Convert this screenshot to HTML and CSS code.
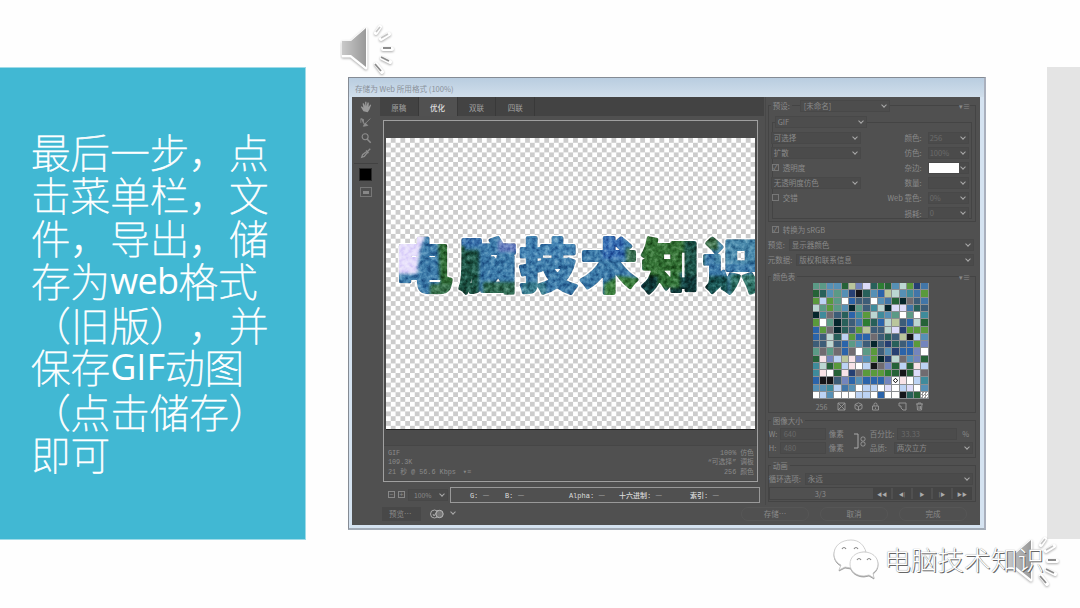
FILE: index.html
```html
<!DOCTYPE html>
<html lang="zh-CN">
<head>
<meta charset="utf-8">
<title>存储为 Web 所用格式</title>
<link rel="stylesheet" href="styles.css">
</head>
<body>
<svg class="defs" width="0" height="0">
  <defs>
    <linearGradient id="horn" x1="0" x2="1"><stop offset="0" stop-color="#c9c9c9"/><stop offset="1" stop-color="#999"/></linearGradient>
    <symbol id="speaker" viewBox="0 0 56 56">
      <g fill="#fff" stroke="#fff" stroke-linecap="round" stroke-linejoin="round" class="soft">
        <path d="M3 18h8L26 5v39L11 32H3z" stroke-width="3"/>
        <path d="M36 9l4-6M41 15l8-5M43 25h9M42 34l8 4M36 40l6 8" stroke-width="4"/>
      </g>
      <path d="M2 17h9L26 4v39L11 31H2z" fill="url(#horn)"/>
      <path d="M36 8l4-5M41 14l7-4" stroke="#c4c4c4" stroke-width="1.6"/>
      <path d="M43 24h8M41 33l8 4M35 40l6 7" stroke="#8c8c8c" stroke-width="1.8"/>
    </symbol>
  </defs>
</svg>
<main class="slide">
  <section class="note">
    <p>最后一步，点</p>
    <p>击菜单栏，文</p>
    <p>件，导出，储</p>
    <p>存为<span class="latin web">web</span>格式</p>
    <p class="drop">（旧版），并</p>
    <p>保存<span class="latin gif">GIF</span>动图</p>
    <p class="drop2">（点击储存）</p>
    <p class="last">即可</p>
  </section>

  <section class="dialog">
    <header class="titlebar">存储为 Web 所用格式 (100%)</header>
    <div class="body">
      <div class="upper">
        <nav class="tools">
          <svg viewBox="0 0 14 14"><path d="M4 12L1 7l1-1 2 2-1-5 1.500-.5L6 6V1h1.500v5L9 1.500l1.300.5L10 7l2-3 1 .8-2 5L9 13z" fill="#999"/></svg>
          <svg viewBox="0 0 14 14"><path d="M1 3l3 1v5M1 3v5M5 10l7-7M6 8l3 3-5 1z" fill="#8d8d8d" stroke="#8d8d8d"/></svg>
          <svg viewBox="0 0 14 14"><circle cx="6" cy="5.500" r="3.500" fill="none" stroke="#8d8d8d" stroke-width="1.300"/><path d="M8.500 8.500l4 4" stroke="#8d8d8d" stroke-width="1.800"/></svg>
          <svg viewBox="0 0 14 14"><path d="M2 12l1-3 5-4 1 1-4 5zM7 4l3 3M9 5l3-3" fill="none" stroke="#8d8d8d" stroke-width="1.500"/></svg>
          <i class="rule"></i>
          <i class="swatch"></i>
          <i class="slice"></i>
        </nav>
        <div class="center">
          <div class="tabs"><span>原稿</span><span class="on">优化</span><span>双联</span><span>四联</span></div>
          <div class="preview">
            <div class="canvas">
              <svg class="art" viewBox="0 0 369 292" width="369" height="292">
                <defs>
                  <pattern id="forest" patternUnits="userSpaceOnUse" x="0" y="90" width="400" height="80">
                    <rect width="400" height="80" fill="#3e7dab"/>
                    <g class="haze">
                      <path d="M0 0h42L34 22 31 46H0z" fill="#e5ddfb"/>
                      <path d="M52 10h26v60H48l6-16z" fill="#2f6b35"/>
                      <path d="M44 56h30v20H44z" fill="#3c7550"/>
                      <path d="M73 8h26v10H73z" fill="#3b74ae"/>
                      <path d="M73 22h20v46H72z" fill="#1d5445"/>
                      <path d="M97 54h34v20H97z" fill="#2f6a52"/>
                      <path d="M112 12h20v12h-20z" fill="#6f86c4"/>
                      <path d="M132 8h60v24h-60z" fill="#4585b4"/>
                      <path d="M136 54h24v18h-24z" fill="#3a7f90"/>
                      <path d="M218 56l14-8 22 2v24h-36z" fill="#3a7d3c"/>
                      <path d="M240 20h16v20h-16z" fill="#3a6f52"/>
                      <path d="M216 5h22v26h-22z" fill="#386fb3"/>
                      <path d="M256 5h50v34l-20 11-30 5z" fill="#357336"/>
                      <path d="M256 48h62v28h-62z" fill="#0f3838"/>
                      <path d="M272 43h22v17h-22z" fill="#327338"/>
                      <path d="M298 12h20v36h-20z" fill="#1c5348"/>
                      <path d="M318 48h24v26h-24z" fill="#16504f"/>
                      <path d="M328 8h60v28h-60z" fill="#4a8aac"/>
                      <path d="M318 8h14v14h-14z" fill="#3d6f4a"/>
                      <path d="M344 46h40v30h-40z" fill="#35796e"/>
                    </g>
                  </pattern>
                  <filter id="leaf" x="-.02" y="-.05" width="1.04" height="1.1" color-interpolation-filters="sRGB">
                    <feTurbulence type="fractalNoise" baseFrequency=".22" numOctaves="3" seed="4" result="n"/>
                    <feColorMatrix in="n" values="1.200 0 0 0 -.12  1.200 0 0 0 -.12  1.200 0 0 0 -.12  0 0 0 0 1" result="m"/>
                    <feBlend in="m" in2="SourceGraphic" mode="soft-light" result="b"/>
                    <feComposite in="b" in2="SourceGraphic" operator="in" result="c"/>
                    <feMorphology in="SourceAlpha" operator="dilate" radius=".8" result="d"/>
                    <feFlood flood-color="#fff"/>
                    <feComposite in2="d" operator="in" result="e"/>
                    <feMerge><feMergeNode in="e"/><feMergeNode in="c"/></feMerge>
                  </filter>
                </defs>
                <text class="glyphs" x="9 73.500 133.500 194.500 256 317" y="149" fill="url(#forest)" stroke="url(#forest)" filter="url(#leaf)">电脑技术知识</text>
              </svg>
            </div>
            <div class="info">
              <div>GIF<br>109.3K<br>21 秒 @ 56.6 Kbps　<b>▾≡</b></div>
              <div class="right">100% 仿色<br>“可选择” 调板<br>256 颜色</div>
            </div>
          </div>
          <div class="status">
            <i class="sq">−</i><i class="sq">+</i><span class="dd zoom">100%</span>
            <div class="readout"><span class="g">G: <u>—</u></span><span class="b">B: <u>—</u></span><span class="a">Alpha: <u>—</u></span><span class="h">十六进制: <u>—</u></span><span>索引: <u>—</u></span></div>
          </div>
        </div>
        <aside class="side">
          <div class="group preset">
            <div class="legend"><span>预设:</span><span class="dd name">[未命名]</span><b>▾≡</b></div>
            <div class="group format">
              <div class="legend"><span class="dd gifsel">GIF</span></div>
              <div class="row"><span class="dd">可选择</span><label>颜色:</label><span class="dd num">256</span></div>
              <div class="row"><span class="dd">扩散</span><label>仿色:</label><span class="dd num">100%</span></div>
              <div class="row"><span class="check"><i>✓</i>透明度</span><label>杂边:</label><span class="dd num matte"></span></div>
              <div class="row"><span class="dd">无透明度仿色</span><label>数量:</label><span class="dd num"></span></div>
              <div class="row"><span class="check"><i></i>交错</span><label>Web 靠色:</label><span class="dd num">0%</span></div>
              <div class="row"><span class="check"></span><label>损耗:</label><span class="dd num">0</span></div>
            </div>
          </div>
          <div class="line srgb"><span class="check"><i>✓</i>转换为 sRGB</span></div>
          <div class="line"><span>预览:</span><span class="dd wide">显示器颜色</span></div>
          <div class="line"><span>元数据:</span><span class="dd wide">版权和联系信息</span></div>
          <div class="group table">
            <div class="legend"><span>颜色表</span><b>▾≡</b></div>
            <div class="palette" id="palette"></div>
            <div class="icons">
              <span>256</span>
              <svg viewBox="0 0 9 9"><path d="M1 1h7v7H1zM1 1l7 7M8 1L1 8"/></svg>
              <svg viewBox="0 0 9 9"><path d="M4.500.8L8 2.500v4L4.500 8.200 1 6.500v-4zM1 2.500l3.500 2L8 2.500M4.500 4.500v3.700"/></svg>
              <svg viewBox="0 0 9 9"><path d="M1.500 4h6v4h-6zM3 4V2.500a1.500 1.500 0 013 0V4M4.500 5.500V7"/></svg>
              <svg class="gap" viewBox="0 0 9 9"><path d="M1 1h7v7H5L3 6V4H1z"/></svg>
              <svg viewBox="0 0 9 9"><path d="M1 2h7M3 2V1h3v1M2 2l.5 6h4L7 2M4 4v3M5.500 4v3"/></svg>
            </div>
          </div>
          <div class="group size">
            <div class="legend"><span>图像大小</span></div>
            <div class="sizes">
              <div class="dims"><div><span>W:</span><i>640</i><span>像素</span></div><div><span>H:</span><i>480</i><span>像素</span></div></div>
              <svg viewBox="0 0 14 18"><path d="M1 2h4v14H1" stroke="#aaa"/><rect x="8" y="5" width="4" height="4" rx="1.500"/><rect x="8" y="10" width="4" height="4" rx="1.500"/></svg>
              <div class="scale"><div><span>百分比:</span><i>33.33</i><span>%</span></div><div><span>品质:</span><span class="dd wide">两次立方</span></div></div>
            </div>
          </div>
          <div class="group anim">
            <div class="legend"><span>动画</span></div>
            <div class="line"><span>循环选项:</span><span class="dd wide">永远</span></div>
            <div class="player"><span>3/3</span><i>◀◀</i><i>◀|</i><i>▶</i><i>|▶</i><i>▶▶</i></div>
          </div>
        </aside>
      </div>
      <footer class="actions">
        <span class="btn">预览…</span>
        <svg viewBox="0 0 14 12" width="14" height="12"><circle cx="4.500" cy="6" r="4" fill="none" stroke="#aaa"/><circle cx="9.500" cy="6" r="3.700" fill="#777" stroke="#bbb"/><path d="M3 6l1 2 4-6" fill="none" stroke="#aaa"/></svg>
        <span class="dd browser"></span>
        <div class="pills"><span>存储…</span><span>取消</span><span>完成</span></div>
      </footer>
    </div>
  </section>
  <aside class="strip"></aside>
</main>
<svg class="speaker top"><use href="#speaker"/></svg>
<svg class="speaker bottom"><use href="#speaker"/></svg>
<div class="watermark">
  <svg viewBox="0 0 46 42" width="46" height="42">
    <path d="M18 3C8 3 1 9 1 17c0 5 3 9 7 11l-2 5 6-3 6 1c1 0 0-1 0-3 0-7 6-13 15-13C31 8 26 3 18 3z"/>
    <path d="M31 15c-8 0-14 5-14 12s6 12 14 12l5-1 5 3-1-5c3-2 5-5 5-9 0-7-6-12-14-12z"/>
    <path d="M9 12q2-3 4 0M21 12q2-3 4 0M24 23q2-3 4 0M34 23q2-3 4 0" class="eye"/>
  </svg>
  <span>电脑技术知识</span>
</div>
<script src="palette.js"></script>
</body>
</html>
```
FILE: styles.css
```css
* { box-sizing: border-box; }
body {
  margin: 0; width: 1080px; height: 608px; overflow: hidden; position: relative;
  background: #fefefe; font-family: "Noto Sans CJK SC", "Noto Sans", sans-serif;
}
i { font-style: normal; }
u { text-decoration: none; font-family: "Noto Sans CJK SC", sans-serif; }
.defs { position: absolute; }
.slide { display: flex; align-items: flex-start; height: 608px; }

.note {
  width: 305px; height: 471px; margin-top: 68px; padding: 61px 0 0 31px;
  background: #41b8d3; color: #fff; font-weight: 100; font-size: 39.600px;
  outline: 1px solid #9fdbe8; text-spacing-trim: space-all;
}
.note p { margin: 0; height: 43px; line-height: 43px; white-space: nowrap; -webkit-text-stroke: .7px #fff; }
.note .drop { padding-top: 1px; }
.note .drop2 { height: 44px; padding-top: 2px; }
.note p .latin { font-family: "Open Sans", "Noto Sans", sans-serif; font-weight: 400; font-size: 36px; line-height: 1; vertical-align: 3px; -webkit-text-stroke: 0; }
.web { letter-spacing: -.6px; }

.dialog {
  width: 638px; height: 453px; margin: 77px 0 0 43px; padding: 0 4px 4px 3px;
  background: #d5e3f1; border: 1px solid #858b94; border-right: 2px solid #aab0bd; border-bottom: 2px solid #a2abb6;
  font-size: 7.500px; color: #8a8a8a;
}
.titlebar { height: 19px; line-height: 21px; color: #8a919a; font-size: 7.600px; background: linear-gradient(#b9cde0, #d0deeb); margin: 0 -4px 0 -3px; padding-left: 6px; }
.body { height: 428px; background: #505050; }
.upper { display: flex; height: 408px; }

.tools { width: 28px; display: flex; flex-direction: column; align-items: center; padding-top: 4px; }
.tools svg { width: 12px; height: 12px; margin-bottom: 3.300px; }
.rule { width: 24px; height: 1px; background: #424242; margin: 1px 0 4px; }
.swatch { width: 13px; height: 13px; background: #000; border: 1px solid #2a2a2a; }
.slice { width: 12px; height: 10px; border: 1px solid #777; margin-top: 6px; background: linear-gradient(#888, #888) center / 6px 3px no-repeat; }

.center { width: 385px; }
.tabs { display: flex; height: 19px; background: #434343; line-height: 22px; }
.tabs span { width: 38.800px; text-align: center; border-right: 1px solid #393939; color: #a2a2a2; }
.tabs .on { background: #515151; color: #ddd; font-weight: 500; }
.preview { width: 375px; height: 362px; margin: 4px 0 0 3px; border: 1px solid #a0a0a0; padding-top: 17px; background: #4b4b4b; }
.canvas {
  width: 369px; height: 292px; margin-left: 2px; overflow: hidden;
  background: repeating-conic-gradient(#ccc 0 25%, #fff 0 50%) 0 0 / 9.600px 9.600px; border-bottom: 1px solid #222;
}
.art { display: block; }
.glyphs { font-size: 57px; font-weight: 900; stroke-width: 3.800px; stroke-linejoin: round; }
.haze { filter: blur(1.500px); }
.info { display: flex; justify-content: space-between; margin-top: 15px; height: 35px; padding: 3px 3px 0 4px; line-height: 9.300px; background: #505050; font-family: "Liberation Mono", "Noto Sans CJK SC", monospace; font-size: 6.800px; border-top: 1px solid #464646; }
.info .right { text-align: right; }
.info b, .legend b { font-weight: 400; font-size: 7px; }

.status { display: flex; align-items: center; margin-top: 4px; height: 17px; padding-left: 8px; }
.sq { width: 7px; height: 7px; border: 1px solid #888; margin-right: 3px; font-size: 7px; line-height: 5px; text-align: center; }
.dd { position: relative; display: block; flex: none; height: 12px; padding-left: 2px; background: #4b4b4b; border: 1px solid #484848; line-height: 10px; white-space: nowrap; }
.dd::after { content: ""; position: absolute; right: 3px; top: 2px; width: 3px; height: 3px; border: solid #aaa; border-width: 0 1.300px 1.300px 0; transform: rotate(45deg); }
.zoom { width: 40px; padding-left: 5px; font-size: 6.800px; }
.readout { width: 310px; height: 16px; border: 1px solid #999; margin-left: 2px; padding-left: 19px; display: flex; line-height: 14px; color: #ddd; font-size: 7px; font-weight: 500; font-family: "Liberation Mono", "Noto Sans CJK SC", monospace; white-space: nowrap; }
.readout .g { width: 35px; }
.readout .b { width: 64px; }
.readout .a { width: 50px; }
.readout .h { width: 71px; }

.side { width: 216px; padding: 0 4px 0 2px; margin-left: 1px; border-left: 1px solid #484848; }
.group { border: 1px solid #444; }
.legend { display: flex; align-items: center; height: 14px; margin: -7px 0 0 2px; line-height: 14px; }
.legend > span { background: #505050; padding: 0 2px; }
.legend b { margin-left: auto; margin-right: 5px; background: #505050; }
.preset { margin-top: 8px; height: 117px; }
.preset .name { width: 90px; margin-left: 8px; padding-left: 3px; }
.legend .dd { background: #4d4d4d; line-height: 10px; }
.format { height: 97px; margin: 9px 3px 0; }
.gifsel { width: 92px; }
.format .legend { margin-left: 2px; height: 16px; margin-top: -9px; }
.row { display: flex; align-items: center; height: 15.100px; margin-left: -2px; }
.row > :first-child { width: 90px; }
.row label { width: 61px; text-align: right; margin-right: 6px; }
.row .num { width: 41px; color: #6b6b6b; padding-left: 1px; }
.row .matte { background: linear-gradient(90deg, #fff 30px, #4b4b4b 30px); }
.check { display: flex; align-items: center; gap: 4px; padding-left: 1px; }
.check i { width: 7px; height: 7px; border: 1px solid #777; font-size: 7px; line-height: 5px; }
.line { display: flex; align-items: center; height: 15px; gap: 4px; }
.wide { flex: 1; margin-right: 2px; }
.srgb { padding-left: 3px; }
.table { margin-top: 9px; height: 137px; }
.palette { display: grid; grid-template: repeat(16, 7.250px) / repeat(16, 7.250px); width: 116px; margin: -1px 0 0 44px; background: #8b8f92; }
.palette i { margin: 0 1px 1px 0; }
.palette .sel { background: #fff radial-gradient(circle, #fff 1px, #333 1.200px 2px, #fff 2.300px); }
.palette .clear { background: repeating-conic-gradient(#999 0 25%, #fff 0 50%) 0 0 / 3px 3px; }
.icons { display: flex; align-items: center; height: 15px; padding-left: 47px; gap: 8px; font-size: 7px; }
.icons span { width: 13px; }
.icons svg { width: 9px; height: 9px; fill: none; stroke: #999; stroke-width: .9; }
.icons .gap { margin-left: 10px; }
.size { margin-top: 7px; height: 38px; }
.sizes { display: flex; line-height: 14px; align-items: center; margin-top: -1px; }
.sizes svg { width: 14px; height: 18px; fill: none; stroke: #999; margin: 0 3px 0 9px; }
.dims > div, .scale > div { display: flex; align-items: center; height: 14px; }
.sizes i { background: #4c4c4c; border: 1px solid #484848; height: 12px; line-height: 10px; padding-left: 3px; color: #6a6a6a; }
.dims span:first-child { width: 11px; }
.dims i { width: 46px; margin-right: 3px; }
.scale { flex: 1; }
.scale i { width: 60px; margin: 0 5px 0 3px; }
.scale .wide { margin-left: 7px; }
.anim { margin-top: 7px; height: 37px; }
.anim .line { margin-top: -2px; }
.player { display: flex; height: 13px; line-height: 11px; margin: 1px 3px 0 0; border: 1px solid #444; gap: 2px; }
.player span { flex: 1; text-align: center; }
.player i { width: 18px; text-align: center; background: #454545; color: #aaa; font-size: 5px; }

.actions { display: flex; align-items: center; height: 17px; padding-left: 30px; }
.btn { width: 39px; height: 14px; line-height: 13px; background: #484848; padding-left: 7px; margin-right: 9px; }
.browser { width: 14px; background: none; border: 0; }
.pills { margin-left: auto; margin-right: 13px; display: flex; gap: 11px; }
.pills span { width: 68px; height: 14px; line-height: 12px; text-align: center; border: 1px solid #565656; border-radius: 7px; }

.strip { width: 33px; height: 472px; margin: 67px 0 0 auto; background: #e4e4e4; }
.speaker { position: absolute; width: 56px; height: 56px; }
.speaker.top { left: 340px; top: 24px; }
.speaker.bottom { left: 1005px; top: 536px; }
.soft { filter: drop-shadow(0 1px 1px #aaa); }
.watermark { position: absolute; left: 833px; top: 536px; display: flex; align-items: center; gap: 5px; height: 44px; font-size: 26.700px; line-height: 40px; font-weight: 300; color: #fff; text-shadow: 1px 1px 0 #666, 0 0 1px #777; white-space: nowrap; }
.watermark span { margin-top: 1px; }
.watermark svg { fill: #fff; stroke: #c8c8c8; stroke-width: .8; filter: drop-shadow(.5px 1px 0 #999); }
.watermark .eye { fill: none; stroke: #888; stroke-width: 1.200; }
```
FILE: palette.js
```js
const colors = {
  t: '#5b9a86', b: '#4276a8', s: '#5690b5', g: '#5a9a3c', G: '#266238', d: '#06262c',
  w: '#ffffff', l: '#dddcfa', p: '#bcd3f4', n: '#263f72', T: '#28605a', y: '#bac69c',
  c: '#3f8b9b', B: '#2b64aa', r: '#706b70', v: '#7485bd', k: '#15161a', m: '#bcd6d2',
  P: '#f8e3e8', e: '#3d5d78', f: '#2d7d33'
};
const rows = [
  'ttssGyvlTfGsmgnb', 'GTstsnkTsBymscbg', 'gpgtwBeewsbGdreb', 'mtgtsdtecmdllbTe',
  'dcreTBcgmcstwtwc', 'gwtdTebfTBmyeBmG', 'BgrdTegyeemlnggg', 'BemTpgBBreTeykps',
  'eemeBtsedenTeBgv', 'trtrBrwtgesnBBvw', 'GPvpyPvsgdnmrsvG', 'cmGgpPwpkrvGpGPp',
  'cPwGPnrgggfGkGlr', 'BkkevBsBBBvoPwpc', 'sscpbswppwlwplws', 'wpswwwppwBwwkTGx'
];
const palette = document.getElementById('palette');
for (const ch of rows.join('')) {
  const cell = document.createElement('i');
  if (ch === 'o') cell.className = 'sel';
  else if (ch === 'x') cell.className = 'clear';
  else cell.style.background = colors[ch];
  palette.append(cell);
}
```
